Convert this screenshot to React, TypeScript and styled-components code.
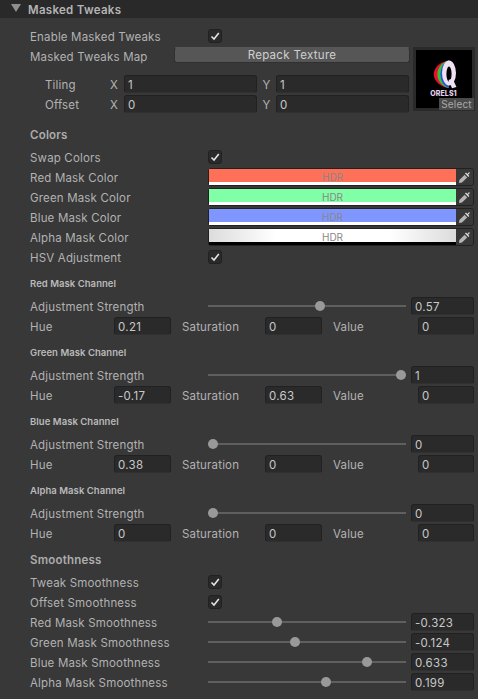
import styled, { createGlobalStyle } from 'styled-components';

const GlobalStyle = createGlobalStyle`
    html, body {
        margin: 0;
        padding: 0;
        background: #383838;
    }
    body {
        font-family: Inter, "Noto Sans", "Liberation Sans", sans-serif;
        font-size: 11.5px;
        color: #b2b2b2;
    }
`;

const Panel = styled.div`
    width: 478px;
    height: 699px;
    overflow: hidden;
    background: #383838;
`;

const Header = styled.div`
    height: 18px;
    box-sizing: border-box;
    display: flex;
    align-items: center;
    gap: 7px;
    padding: 1px 0 0 11px;
    background: #292929;
    font-weight: 600;
    color: #b4b4b4;
    font-size: 11.5px;
    letter-spacing: 0.3px;
`;

const Arrow = styled.div`
    width: 0;
    height: 0;
    border-left: 5px solid transparent;
    border-right: 5px solid transparent;
    border-top: 8px solid #8f8f8f;
    margin-top: -3px;
`;

const Body = styled.div`
    padding: 8px 4px 0 30px;
`;

const Row = styled.div`
    height: 20px;
    display: flex;
    align-items: center;
`;

const Label = styled.div`
    width: 178px;
    flex: none;
    padding-top: 1px;
    white-space: nowrap;
    letter-spacing: 0.17px;
`;

const Box = styled.div`
    width: 14px;
    height: 14px;
    box-sizing: border-box;
    background: #2a2a2a;
    border: 1px solid #212121;
    border-radius: 3px;
    display: flex;
    align-items: center;
    justify-content: center;
`;

const SectionTitle = styled.div<{ $top: number }>`
    height: 20px;
    margin-top: ${(p) => p.$top}px;
    margin-bottom: 3px;
    line-height: 22px;
    font-weight: 600;
    color: #adadad;
    letter-spacing: 0.2px;
`;

const ChannelTitle = styled.div`
    height: 20px;
    margin-top: 6px;
    margin-bottom: 3px;
    line-height: 22px;
    font-size: 9.5px;
    font-weight: 600;
    color: #bababa;
    letter-spacing: 0.05px;
`;

const MapGrid = styled.div`
    display: grid;
    grid-template-columns: 380px 62px;
    column-gap: 3px;
`;

const RepackButton = styled.div`
    flex: 1;
    height: 14px;
    margin-left: -34px;
    margin-top: -2px;
    background: #565656;
    border: 1px solid #303030;
    border-top-color: #585858;
    border-radius: 3px;
    text-align: center;
    line-height: 14px;
    color: #cfcfcf;
    letter-spacing: 0.3px;
`;

const TransformRows = styled.div`
    margin-top: 8px;
    padding-left: 15px;
`;

const TransformLabel = styled.div`
    width: 65px;
    flex: none;
    padding-top: 1px;
    letter-spacing: 0.17px;
`;

const AxisLabel = styled.div<{ $width: number }>`
    width: ${(p) => p.$width}px;
    flex: none;
    padding-top: 1px;
    text-align: ${(p) => (p.$width > 14 ? 'center' : 'left')};
`;

const Field = styled.div<{ $width?: number }>`
    ${(p) => (p.$width ? `width: ${p.$width}px; flex: none;` : 'flex: 1;')}
    height: 18px;
    box-sizing: border-box;
    background: #2a2a2a;
    border: 1px solid #212121;
    border-bottom-color: #303030;
    border-radius: 3px;
    padding-left: 3px;
    line-height: 18px;
    color: #c8c8c8;
    font-size: 11.5px;
    letter-spacing: 0.3px;
`;

const Thumb = styled.div`
    position: relative;
    width: 62px;
    height: 64px;
    margin-top: 1px;
    box-sizing: border-box;
    background: #000;
    border: 3px solid #2a2a2a;
    display: flex;
    flex-direction: column;
    align-items: center;
`;

const LogoText = styled.div`
    font-size: 7px;
    line-height: 8px;
    font-weight: 800;
    color: #e6d2ea;
    letter-spacing: 0.1px;
    margin-top: 1px;
    margin-right: 1px;
`;

const SelectTag = styled.div`
    position: absolute;
    right: -2px;
    bottom: -2px;
    width: 35px;
    height: 12px;
    background: #4a4a4a;
    font-size: 10px;
    line-height: 12px;
    text-align: center;
    color: #a8a8a8;
    letter-spacing: 0.2px;
`;

const ColorField = styled.div`
    width: 266px;
    height: 18px;
    box-sizing: border-box;
    display: flex;
    background: #2a2a2a;
    border: 1px solid #212121;
    border-radius: 3px;
`;

const Swatch = styled.div`
    flex: 1;
    display: flex;
    flex-direction: column;
`;

const SwatchColor = styled.div<{ $fill: string }>`
    height: 13px;
    background: ${(p) => p.$fill};
    font-size: 10px;
    line-height: 17px;
    overflow: hidden;
    text-align: center;
    color: #888888;
`;

const SwatchAlpha = styled.div<{ $fill: string }>`
    height: 3px;
    background: ${(p) => p.$fill};
`;

const Dropper = styled.div`
    width: 17px;
    flex: none;
    background: #383838;
    border-radius: 0 2px 2px 0;
    display: flex;
    align-items: center;
    justify-content: center;
`;

const Slider = styled.div`
    position: relative;
    width: 198px;
    flex: none;
    height: 20px;
    display: flex;
    align-items: center;
`;

const Track = styled.div`
    width: 100%;
    height: 2px;
    background: #5f5f5f;
`;

const Knob = styled.div`
    position: absolute;
    top: 5px;
    width: 10px;
    height: 10px;
    margin-left: -5px;
    border-radius: 50%;
    background: #999999;
`;

const SliderValue = styled(Field)`
    width: 63px;
    flex: none;
    margin-left: 5px;
`;

const HsvLabel = styled.div<{ $width: number; $gap?: number }>`
    width: ${(p) => p.$width}px;
    margin-left: ${(p) => p.$gap ?? 0}px;
    padding-top: 1px;
    flex: none;
    letter-spacing: 0.17px;
`;

function Check() {
    return (
        <Box>
            <svg width="10" height="10" viewBox="0 0 10 10">
                <path d="M1.5 5.5 L4 8 L8.8 2" fill="none" stroke="#e4e4e4" strokeWidth="1.6" />
            </svg>
        </Box>
    );
}

function ToggleRow({ label }: { label: string }) {
    return (
        <Row>
            <Label>{label}</Label>
            <Check />
        </Row>
    );
}

function ColorRow({ label, fill, alpha }: { label: string; fill: string; alpha: string }) {
    return (
        <Row>
            <Label>{label}</Label>
            <ColorField>
                <Swatch>
                    <SwatchColor $fill={fill}>HDR</SwatchColor>
                    <SwatchAlpha $fill={alpha} />
                </Swatch>
                <Dropper>
                    <svg width="13" height="13" viewBox="0 0 13 13">
                        <path d="M8 1.6 L9.3 2.9 L10.6 1.5 C11.2 0.9 12.1 1.8 11.5 2.4 L10.1 3.7 L11.4 5 L10.4 6 L7 2.6 Z" fill="#dcdcdc" />
                        <path d="M6.6 3.8 L9.2 6.4 L4 11.6 L1.6 12 L1 11.4 L1.4 9 Z" fill="#b4b4b4" />
                    </svg>
                </Dropper>
            </ColorField>
        </Row>
    );
}

function SliderRow({ label, value, min = 0, max = 1 }: { label: string; value: number; min?: number; max?: number }) {
    // knob stays 5px inside both ends of the track
    const left = 5 + ((value - min) / (max - min)) * 188;
    return (
        <Row>
            <Label>{label}</Label>
            <Slider>
                <Track />
                <Knob style={{ left }} />
            </Slider>
            <SliderValue>{value}</SliderValue>
        </Row>
    );
}

function Channel({ name, strength, hue, sat, val }: { name: string; strength: number; hue: number; sat: number; val: number }) {
    return (
        <>
            <ChannelTitle>{name}</ChannelTitle>
            <SliderRow label="Adjustment Strength" value={strength} />
            <Row>
                <HsvLabel $width={84}>Hue</HsvLabel>
                <Field $width={57}>{hue}</Field>
                <HsvLabel $width={83} $gap={11}>Saturation</HsvLabel>
                <Field $width={57}>{sat}</Field>
                <HsvLabel $width={85} $gap={11}>Value</HsvLabel>
                <Field $width={56}>{val}</Field>
            </Row>
        </>
    );
}

export default function App() {
    return (
        <Panel>
            <GlobalStyle />
            <Header>
                <Arrow />
                Masked Tweaks
            </Header>
            <Body>
                <ToggleRow label="Enable Masked Tweaks" />
                <MapGrid>
                    <div>
                        <Row>
                            <Label>Masked Tweaks Map</Label>
                            <RepackButton>Repack Texture</RepackButton>
                        </Row>
                        <TransformRows>
                            <Row>
                                <TransformLabel>Tiling</TransformLabel>
                                <AxisLabel $width={14}>X</AxisLabel>
                                <Field $width={133}>1</Field>
                                <AxisLabel $width={19}>Y</AxisLabel>
                                <Field $width={133}>1</Field>
                            </Row>
                            <Row>
                                <TransformLabel>Offset</TransformLabel>
                                <AxisLabel $width={14}>X</AxisLabel>
                                <Field $width={133}>0</Field>
                                <AxisLabel $width={19}>Y</AxisLabel>
                                <Field $width={133}>0</Field>
                            </Row>
                        </TransformRows>
                    </div>
                    <Thumb>
                        <svg width="56" height="39" viewBox="0 0 56 39">
                            <path d="M33 10.5 A18.7 14 0 0 0 33 38 Z" fill="#e8102e" />
                            <path d="M33 10.5 A14.3 14 0 0 0 33 38 Z" fill="#2fc42f" />
                            <path d="M33 10.5 A10.7 14 0 0 0 33 38 Z" fill="#2a50e8" />
                            <path d="M33 10.5 A7 12.5 0 0 1 33 35.5 A7 12.5 0 0 1 33 10.5 Z" fill="#efe0f2" />
                            <path d="M33 16.5 A2.6 7.5 0 0 1 33 31.5 A2.6 7.5 0 0 1 33 16.5 Z" fill="#000" />
                            <path d="M32.5 30 L36.5 28.5 L40.5 37 L36 38.3 Z" fill="#efe0f2" />
                        </svg>
                        <LogoText>ORELS1</LogoText>
                        <SelectTag>Select</SelectTag>
                    </Thumb>
                </MapGrid>
                <SectionTitle $top={10}>Colors</SectionTitle>
                <ToggleRow label="Swap Colors" />
                <ColorRow label="Red Mask Color" fill="#ff7059" alpha="#fff" />
                <ColorRow label="Green Mask Color" fill="#80ffa6" alpha="#fff" />
                <ColorRow label="Blue Mask Color" fill="#7f96ff" alpha="#fff" />
                <ColorRow
                    label="Alpha Mask Color"
                    fill="linear-gradient(90deg, #dcdcdc 0%, #ffffff 27%, #ffffff 73%, #dcdcdc 100%)"
                    alpha="#000"
                />
                <ToggleRow label="HSV Adjustment" />
                <Channel name="Red Mask Channel" strength={0.57} hue={0.21} sat={0} val={0} />
                <Channel name="Green Mask Channel" strength={1} hue={-0.17} sat={0.63} val={0} />
                <Channel name="Blue Mask Channel" strength={0} hue={0.38} sat={0} val={0} />
                <Channel name="Alpha Mask Channel" strength={0} hue={0} sat={0} val={0} />
                <SectionTitle $top={6}>Smoothness</SectionTitle>
                <ToggleRow label="Tweak Smoothness" />
                <ToggleRow label="Offset Smoothness" />
                <SliderRow label="Red Mask Smoothness" value={-0.323} min={-1} />
                <SliderRow label="Green Mask Smoothness" value={-0.124} min={-1} />
                <SliderRow label="Blue Mask Smoothness" value={0.633} min={-1} />
                <SliderRow label="Alpha Mask Smoothness" value={0.199} min={-1} />
            </Body>
        </Panel>
    );
}
